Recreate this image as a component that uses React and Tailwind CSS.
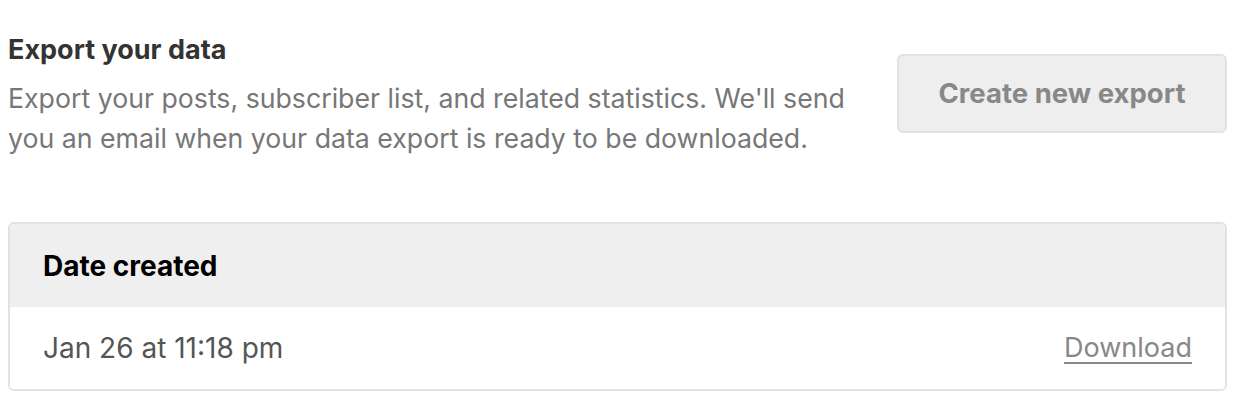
const rows = [{ id: 1, date: "Jan 26 at 11:18 pm" }];

export default function App() {
  return (
    <div className="w-[1240px] h-[406px] bg-white px-2 pt-[32px] font-['Inter','Liberation_Sans',sans-serif]">
      <div className="flex items-start justify-between">
        <div>
          <h2 className="text-[27px] leading-[36px] font-bold text-[#333]">
            Export your data
          </h2>
          <p className="mt-[10px] text-[26.7px] leading-[40px] text-[#777] w-[860px]">
            Export your posts, subscriber list, and related statistics. We'll send
            you an email when your data export is ready to be downloaded.
          </p>
        </div>
        <button className="mt-[22px] mr-[5px] w-[330px] h-[79px] rounded-[6px] border-2 border-[#e2e2e2] bg-[#eeeeee] text-[27.5px] font-bold text-[#888]">
          Create new export
        </button>
      </div>

      <div className="mt-[64px] mr-[5px] rounded-[6px] border-2 border-[#e2e2e2] overflow-hidden">
        <div className="h-[83px] bg-[#efefef] px-[33px] flex items-center">
          <span className="text-[28px] font-bold text-black">Date created</span>
        </div>
        {rows.map((row) => (
          <div key={row.id} className="h-[82px] bg-white px-[33px] flex items-center justify-between">
            <span className="text-[28px] text-[#555]">{row.date}</span>
            <a className="text-[27px] text-[#888] underline underline-offset-[5px]">Download</a>
          </div>
        ))}
      </div>
    </div>
  );
}
